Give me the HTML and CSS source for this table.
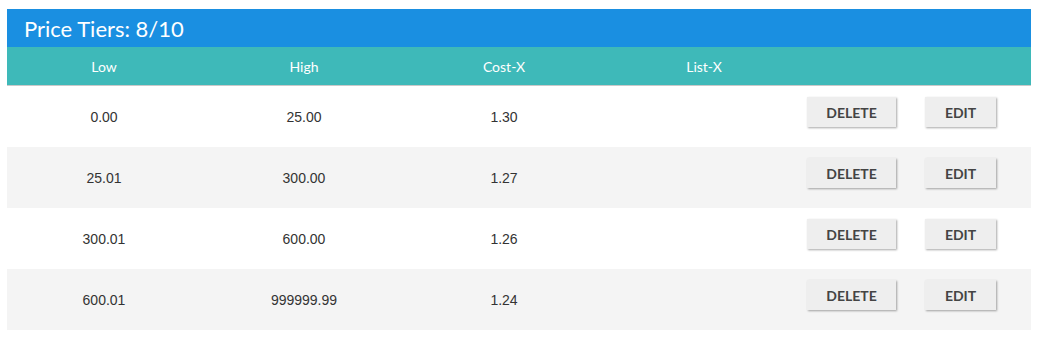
FILE: index.html
```html
<!DOCTYPE html>
<html>
<head>
<meta charset="utf-8">
<link rel="stylesheet" href="styles.css">
</head>
<body>
<div class="panel">
  <div class="title">Price Tiers: 8/10</div>
  <div class="row head">
    <div class="cell">Low</div>
    <div class="cell">High</div>
    <div class="cell">Cost-X</div>
    <div class="cell">List-X</div>
    <div class="cell actions"></div>
  </div>
  <div class="row data">
    <div class="cell">0.00</div>
    <div class="cell">25.00</div>
    <div class="cell">1.30</div>
    <div class="cell"></div>
    <div class="cell actions"><button class="btn del">DELETE</button><button class="btn edit">EDIT</button></div>
  </div>
  <div class="row data alt">
    <div class="cell">25.01</div>
    <div class="cell">300.00</div>
    <div class="cell">1.27</div>
    <div class="cell"></div>
    <div class="cell actions"><button class="btn del">DELETE</button><button class="btn edit">EDIT</button></div>
  </div>
  <div class="row data">
    <div class="cell">300.01</div>
    <div class="cell">600.00</div>
    <div class="cell">1.26</div>
    <div class="cell"></div>
    <div class="cell actions"><button class="btn del">DELETE</button><button class="btn edit">EDIT</button></div>
  </div>
  <div class="row data alt">
    <div class="cell">600.01</div>
    <div class="cell">999999.99</div>
    <div class="cell">1.24</div>
    <div class="cell"></div>
    <div class="cell actions"><button class="btn del">DELETE</button><button class="btn edit">EDIT</button></div>
  </div>
</div>
</body>
</html>
```
FILE: styles.css
```css
html, body {
  margin: 0;
  padding: 0;
  background: #ffffff;
}
body {
  padding: 9px 14px 0 7px;
}
.panel {
  width: 1024px;
}
.title {
  height: 38px;
  background: #1a8fe1;
  color: #ffffff;
  font-family: Lato, "Liberation Sans", sans-serif;
  font-size: 22px;
  line-height: 40px;
  padding-left: 17px;
  box-sizing: border-box;
}
.row {
  display: grid;
  grid-template-columns: 200px 200px 200px 200px 1fr;
}
.cell {
  padding-right: 6px;
  text-align: center;
}
.head {
  height: 38px;
  background: #3eb9b9;
  border-bottom: 1px solid #c9c9c9;
  align-items: center;
  color: #ffffff;
  font-family: Lato, "Liberation Sans", sans-serif;
  font-size: 14px;
}
.data {
  height: 61px;
  align-items: center;
  font-family: "Liberation Sans", Arial, sans-serif;
  font-size: 14px;
  color: #333333;
  background: #ffffff;
}
.data.alt {
  background: #f4f4f4;
}
.actions {
  display: flex;
  align-self: start;
  padding: 11px 0 0 0;
  gap: 29px;
}
.btn {
  height: 30px;
  border: none;
  background: #eeeeee;
  color: #444444;
  font-family: Lato, "Liberation Sans", sans-serif;
  font-weight: bold;
  font-size: 14px;
  box-shadow: 1px 1px 2px rgba(0, 0, 0, 0.35);
  padding: 0;
  margin: 0;
}
.del {
  width: 89px;
}
.edit {
  width: 71px;
}
```
